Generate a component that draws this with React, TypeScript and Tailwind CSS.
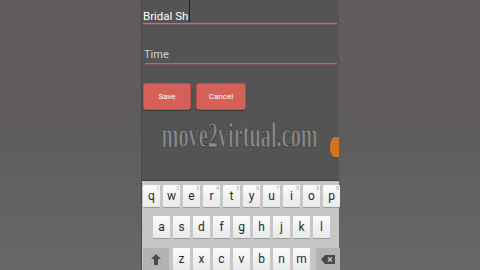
import React from 'react';

const row1 = ['q', 'w', 'e', 'r', 't', 'y', 'u', 'i', 'o', 'p'];
const hints = ['1', '2', '3', '4', '5', '6', '7', '8', '9', '0'];
const row2 = ['a', 's', 'd', 'f', 'g', 'h', 'j', 'k', 'l'];
const row3 = ['z', 'x', 'c', 'v', 'b', 'n', 'm'];

const Key: React.FC<{ label: string; hint?: string }> = ({ label, hint }) => (
  <div className="relative w-[17px] h-[22px] shrink-0 flex items-center justify-center rounded-[1px] bg-gradient-to-b from-[#fbfbfb] to-[#e9e9e9] shadow-[0_1px_0_#9a9a9a] text-[12px] leading-none text-[#2a2a2a]">
    {hint && <span className="absolute top-[1px] right-[1px] text-[5px] leading-none text-[#9a9a9a]">{hint}</span>}
    <span className="-mt-[1px]">{label}</span>
  </div>
);

export default function App() {
  return (
    <div className="w-[480px] h-[270px] flex overflow-hidden bg-gradient-to-b from-[#625b5b] via-[#5f5c5c] to-[#686868] font-['Roboto',sans-serif]">
      {/* left letterbox */}
      <div className="w-[141px] shrink-0" />

      {/* phone screen */}
      <div className="relative w-[198px] shrink-0 flex flex-col bg-[#545454] border-l border-[#4a4a4a]">
        {/* form area */}
        <div className="h-[182px] flex flex-col pl-[1px] pr-[2px]">
          <div className="h-[23px] flex items-end">
            <span className="text-[11.5px] leading-[14px] text-white">Bridal Sh</span>
            <span className="self-start w-px h-[22px] bg-[#1e1e1e] ml-[1px]" />
          </div>
          <div className="h-[2px] border-t border-[#b47583] border-b border-b-[#7c5660]" />

          <div className="mt-[23px] pl-[1px] text-[11px] leading-[14px] text-[#d2d2d2]">Time</div>
          <div className="mt-[1px] ml-[2px] h-[2px] border-t border-[#a86d7b] border-b border-b-[#74525b]" />

          <div className="mt-[18px] flex gap-[5px]">
            <button className="w-[48px] h-[27px] rounded-[3px] bg-[#d5605a] border border-[#b9504b] text-white text-[8px] leading-none shadow-[0_1px_1px_rgba(0,0,0,0.35)]">
              Save
            </button>
            <button className="w-[50px] h-[27px] rounded-[3px] bg-[#d5605a] border border-[#b9504b] text-white text-[8px] leading-none shadow-[0_1px_1px_rgba(0,0,0,0.35)]">
              Cancel
            </button>
          </div>

          <div className="mt-[6px] h-[38px] flex items-center justify-center">
            <span className="inline-block scale-x-[0.58] font-['Liberation_Serif',serif] font-bold text-[35px] leading-none text-[#8a8a8a] [-webkit-text-stroke:0.7px_#2e2e2e] whitespace-nowrap">
              move2virtual.com
            </span>
          </div>
        </div>

        {/* orange edge handle */}
        <div className="absolute right-0 top-[137px] w-[9px] h-[20px] rounded-l-[60%] bg-[#d2731f]" />

        {/* keyboard */}
        <div className="flex-1 flex flex-col bg-[#c6c6c6] border-t border-[#3c3c3c] pt-[4px] pl-[1px]">
          <div className="flex gap-[3px]">
            {row1.map((k, i) => (
              <Key key={k} label={k} hint={hints[i]} />
            ))}
          </div>
          <div className="mt-[9px] pl-[10px] flex gap-[3px]">
            {row2.map((k) => (
              <Key key={k} label={k} />
            ))}
          </div>
          <div className="mt-[10px] flex items-start">
            <div className="w-[26px] h-[22px] shrink-0 flex items-center justify-center rounded-[1px] bg-[#b3b3b3] shadow-[0_1px_0_#8a8a8a]">
              <svg width="10" height="11" viewBox="0 0 10 11">
                <path d="M5 0 L10 5 L7 5 L7 11 L3 11 L3 5 L0 5 Z" fill="#4a4a4a" />
              </svg>
            </div>
            <div className="ml-[4px] flex gap-[3px]">
              {row3.map((k) => (
                <Key key={k} label={k} />
              ))}
            </div>
            <div className="ml-[6px] w-[24px] h-[22px] shrink-0 flex items-center justify-center rounded-[1px] bg-[#b3b3b3] shadow-[0_1px_0_#8a8a8a]">
              <svg width="14" height="9" viewBox="0 0 14 9">
                <path d="M4 0 H14 V9 H4 L0 4.5 Z" fill="#4a4a4a" />
                <path d="M7 2.5 L11 6.5 M11 2.5 L7 6.5" stroke="#c6c6c6" strokeWidth="1.3" />
              </svg>
            </div>
          </div>
        </div>
      </div>

      {/* right letterbox */}
      <div className="flex-1" />
    </div>
  );
}
